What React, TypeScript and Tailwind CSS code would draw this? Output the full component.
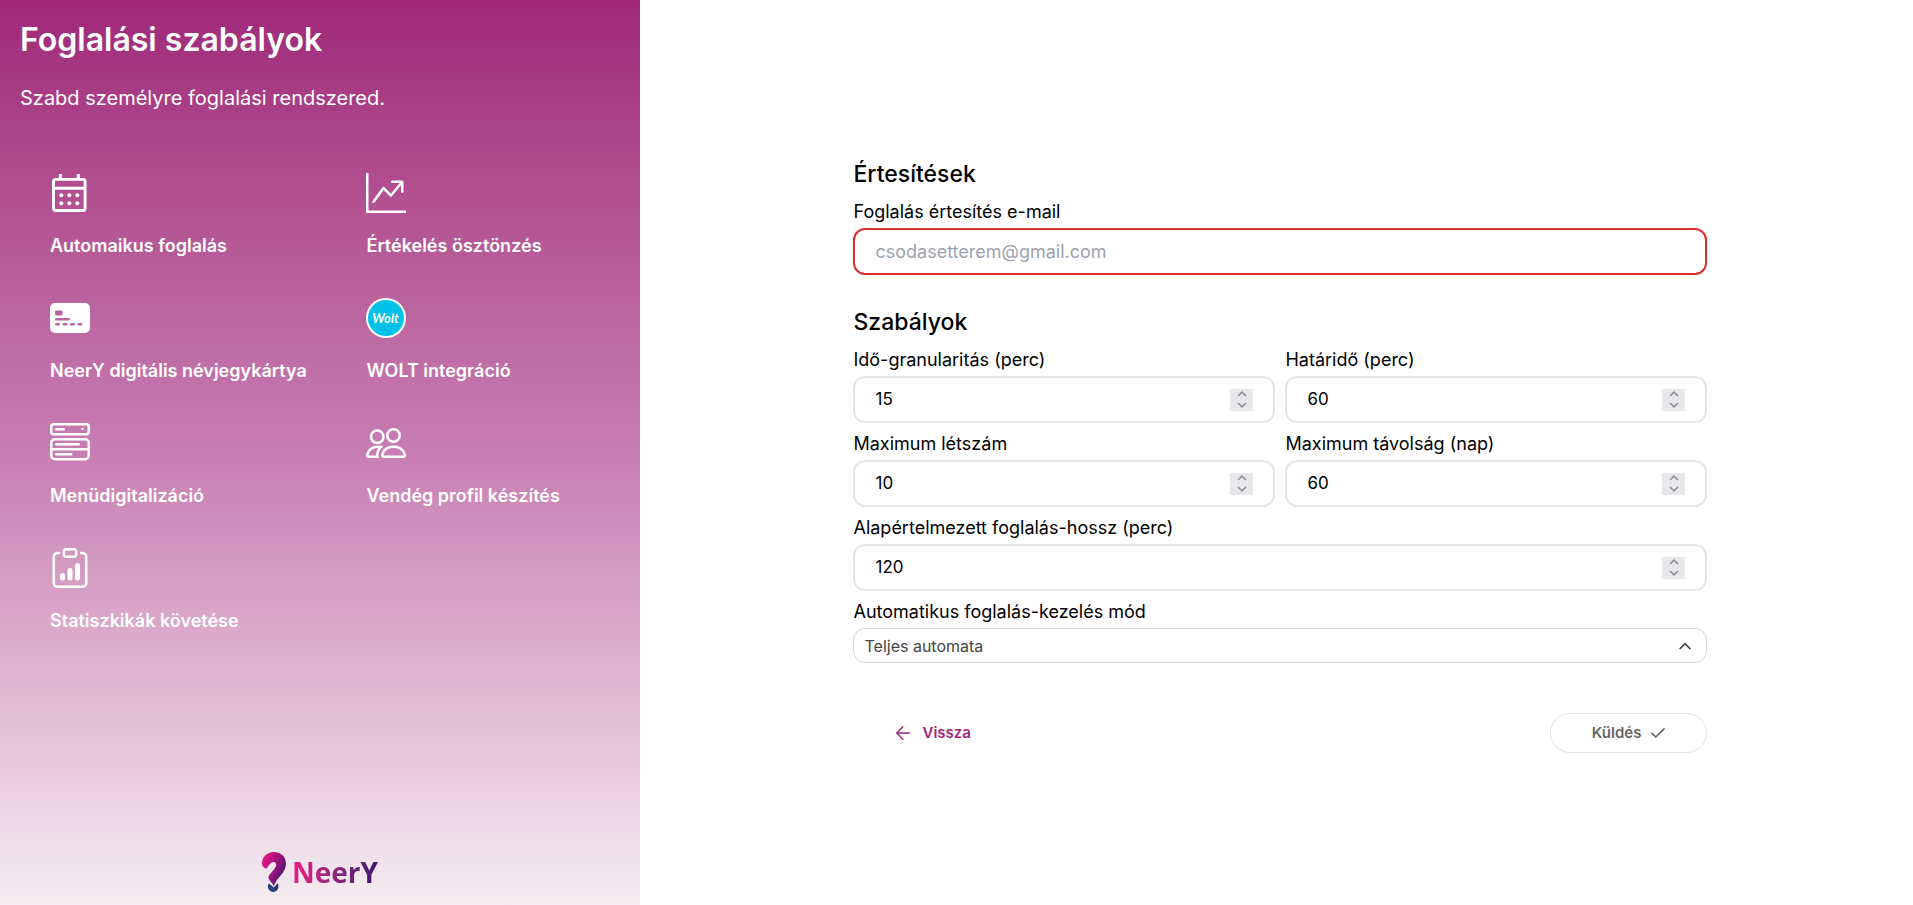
import { useState } from "react";
import type { ReactNode } from "react";
import {
  BsClipboardData,
  BsCreditCard2FrontFill,
  BsGraphUpArrow,
  BsMenuButtonWide,
  BsPeople,
} from "react-icons/bs";

const HEADING = "font-['Inter','Open_Sans',sans-serif]";

function CalendarIcon() {
  return (
    <svg viewBox="0 0 40 40" className="size-10" fill="none" stroke="currentColor" aria-hidden="true">
      <rect x="3.5" y="6.4" width="31.600" height="31.100" rx="2.200" strokeWidth="2.900" />
      <path d="M3.500 15.200h31.600" strokeWidth="2.900" />
      <path d="M10.300 1v6M28.300 1v6" strokeWidth="3" />
      <g fill="currentColor" stroke="none">
        <circle cx="11.300" cy="22.300" r="2" />
        <circle cx="19.300" cy="22.300" r="2" />
        <circle cx="27.300" cy="22.300" r="2" />
        <circle cx="11.300" cy="30.300" r="2" />
        <circle cx="19.300" cy="30.300" r="2" />
        <circle cx="27.300" cy="30.300" r="2" />
      </g>
    </svg>
  );
}

function WoltIcon() {
  return (
    <svg viewBox="0 0 40 40" className="size-10" aria-hidden="true">
      <circle cx="20" cy="20" r="20" fill="#fff" />
      <circle cx="20" cy="20" r="18" fill="#00c2e8" />
      <text
        x="19.500"
        y="24.500"
        textAnchor="middle"
        fill="#fff"
        fontFamily="Lato, sans-serif"
        fontStyle="italic"
        fontWeight="700"
        fontSize="13"
      >
        Wolt
      </text>
    </svg>
  );
}

function Feature({ icon, label }: { icon: ReactNode; label: string }) {
  return (
    <li className="flex flex-col gap-5">
      {icon}
      <span className={`${HEADING} text-[18px] leading-[25px] font-semibold whitespace-nowrap`}>{label}</span>
    </li>
  );
}

function Logo() {
  return (
    <div className="flex items-center justify-center gap-1.5">
      <svg viewBox="0 0 24 40" className="h-10 w-6" aria-hidden="true">
        <defs>
          <linearGradient id="mark" x1="0" y1="0.1" x2="1" y2="0.7">
            <stop offset="0" stopColor="#ee1284" />
            <stop offset="0.5" stopColor="#a3147c" />
            <stop offset="1" stopColor="#3b1470" />
          </linearGradient>
          <linearGradient id="dot" x1="0" y1="1" x2="1" y2="0">
            <stop offset="0" stopColor="#2b5793" />
            <stop offset="1" stopColor="#2a1c62" />
          </linearGradient>
        </defs>
        <path
          d="M4 16.800C1.500 15.400 0 14 0 11.500 0 5 5 0 12 0c7 0 12 5 12 11.600 0 5-2.400 8.400-5.600 12.200-2.500 3-4.600 5.200-6.600 10.200-1.500-3-4.400-5.200-5.200-7.400-.6-2 .8-4 3-6.400 2.400-2.800 4.600-5.200 4.600-7.500 0-1.700-1.200-2.700-2.700-2.700-3 0-4.300 3.400-7.500 6.800Z"
          fill="url(#mark)"
        />
        <path d="M7 31.400l4.800 4 4-4.200c.5 1.200.7 2.400.6 3.800-.3 2.800-2.500 5-5.300 5s-5-2.200-5.200-4.700c-.1-1.500.2-2.800 1.100-3.900Z" fill="url(#dot)" />
      </svg>
      <span className="bg-linear-to-r from-[#ee1284] to-[#3b1470] bg-clip-text font-['Open_Sans','Noto_Sans',sans-serif] text-[28px] leading-9 font-bold text-transparent">
        NeerY
      </span>
    </div>
  );
}

function NumberField({
  id,
  label,
  initial,
  className = "",
}: {
  id: string;
  label: string;
  initial: number;
  className?: string;
}) {
  const [value, setValue] = useState(initial);
  return (
    <div className={`flex min-w-0 flex-col gap-1 ${className}`}>
      <label htmlFor={id} className="leading-6">
        {label}
      </label>
      <div className="flex h-[47px] items-center rounded-xl border-2 border-[#e6e6e6] px-5">
        <input
          id={id}
          type="number"
          value={value}
          onChange={(e) => setValue(Number(e.target.value))}
          className="min-w-0 flex-1 appearance-none bg-transparent text-[17px] outline-none [-moz-appearance:textfield] [&::-webkit-inner-spin-button]:appearance-none"
        />
        <div className="flex h-[22px] w-[23px] flex-col bg-[#e8e7ec] text-[#8f8f9d]">
          <button
            type="button"
            aria-label={`${label} növelése`}
            onClick={() => setValue(value + 1)}
            className="flex flex-1 items-center justify-center"
          >
            <svg viewBox="0 0 10 6" className="h-1.5 w-2.5" fill="none" stroke="currentColor" strokeWidth="1.700" aria-hidden="true">
              <path d="M1 5l4-3.800L9 5" />
            </svg>
          </button>
          <button
            type="button"
            aria-label={`${label} csökkentése`}
            onClick={() => setValue(value - 1)}
            className="flex flex-1 items-center justify-center"
          >
            <svg viewBox="0 0 10 6" className="h-1.5 w-2.5" fill="none" stroke="currentColor" strokeWidth="1.700" aria-hidden="true">
              <path d="M1 1l4 3.800L9 1" />
            </svg>
          </button>
        </div>
      </div>
    </div>
  );
}

export default function App() {
  return (
    <div className="flex min-h-screen bg-white font-['Inter','Noto_Sans',sans-serif] text-black">
      <aside className="flex w-[33.45%] shrink-0 flex-col bg-linear-to-b from-[#9f2779] via-[#c77eb2] to-[#f5edf1] text-white">
        <h1 className={`${HEADING} px-5 pt-5 text-[32px] leading-10 font-semibold`}>Foglalási szabályok</h1>
        <p className="px-5 pt-6 text-[20px] leading-7">Szabd személyre foglalási rendszered.</p>
        <ul className="grid grid-cols-[17fr_12fr] gap-y-10 px-[50px] pt-[61px]">
          <Feature icon={<CalendarIcon />} label="Automaikus foglalás" />
          <Feature icon={<BsGraphUpArrow className="size-10" />} label="Értékelés ösztönzés" />
          <Feature icon={<BsCreditCard2FrontFill className="size-10" />} label="NeerY digitális névjegykártya" />
          <Feature icon={<WoltIcon />} label="WOLT integráció" />
          <Feature icon={<BsMenuButtonWide className="size-10" />} label="Menüdigitalizáció" />
          <Feature icon={<BsPeople className="size-10" />} label="Vendég profil készítés" />
          <Feature icon={<BsClipboardData className="size-10" />} label="Statiszkikák követése" />
        </ul>
        <div className="mt-auto pb-[13px]">
          <Logo />
        </div>
      </aside>

      <main className="flex flex-1 flex-col items-center justify-center pt-1.5 pl-2">
        <form className="w-[67.5%] text-[18px]" onSubmit={(e) => e.preventDefault()}>
          <h2 className={`${HEADING} text-[23px] leading-8 font-medium`}>Értesítések</h2>
          <div className="mt-2.5 flex flex-col gap-1">
            <label htmlFor="email" className="leading-6">
              Foglalás értesítés e-mail
            </label>
            <input
              id="email"
              type="email"
              placeholder="csodasetterem@gmail.com"
              className="h-[47px] w-full rounded-xl border-2 border-[#dc2f2f] px-5 outline-none placeholder:text-[#9ca3af]"
            />
          </div>

          <h2 className={`${HEADING} mt-[31px] text-[23px] leading-8 font-medium`}>Szabályok</h2>
          <div className="mt-2.5 grid grid-cols-2 gap-x-2.5 gap-y-[9px]">
            <NumberField id="granularity" label="Idő-granularitás (perc)" initial={15} />
            <NumberField id="deadline" label="Határidő (perc)" initial={60} />
            <NumberField id="headcount" label="Maximum létszám" initial={10} />
            <NumberField id="distance" label="Maximum távolság (nap)" initial={60} />
            <NumberField id="length" label="Alapértelmezett foglalás-hossz (perc)" initial={120} className="col-span-2" />
            <div className="col-span-2 flex flex-col gap-1">
              <label htmlFor="mode" className="leading-6">
                Automatikus foglalás-kezelés mód
              </label>
              <div className="grid items-center">
                <select
                  id="mode"
                  className="col-start-1 row-start-1 h-[35px] w-full appearance-none rounded-xl border border-[#d4d4d4] bg-white px-2.5 text-[16px] text-[#444] outline-none"
                >
                  <option>Teljes automata</option>
                </select>
                <svg
                  viewBox="0 0 12 8"
                  className="pointer-events-none col-start-1 row-start-1 mr-4 h-2 w-3 justify-self-end"
                  fill="none"
                  stroke="#3f3f3f"
                  strokeWidth="1.700"
                  aria-hidden="true"
                >
                  <path d="M0.700 7L6 1.700 11.300 7" />
                </svg>
              </div>
            </div>
          </div>

          <div className={`${HEADING} mt-[50px] flex h-10 justify-between text-[15px] font-semibold`}>
            <button type="button" className="flex items-center gap-3 px-[43px] text-[#9f2779]">
              <svg viewBox="0 0 14 14" className="size-3.5" fill="none" stroke="currentColor" strokeWidth="1.400" strokeLinecap="round" strokeLinejoin="round" aria-hidden="true">
                <path d="M13.400 7H0.800M6.800 0.800L0.700 7l6.100 6.200" />
              </svg>
              Vissza
            </button>
            <button
              type="submit"
              className="flex items-center gap-2.5 rounded-full border border-[#e3e3e3] px-[41px] text-[#666]"
            >
              Küldés
              <svg viewBox="0 0 14 14" className="size-3.5" fill="none" stroke="currentColor" strokeWidth="1.700" strokeLinecap="round" strokeLinejoin="round" aria-hidden="true">
                <path d="M1 7.300L4.800 11 13 2.800" />
              </svg>
            </button>
          </div>
        </form>
      </main>
    </div>
  );
}
